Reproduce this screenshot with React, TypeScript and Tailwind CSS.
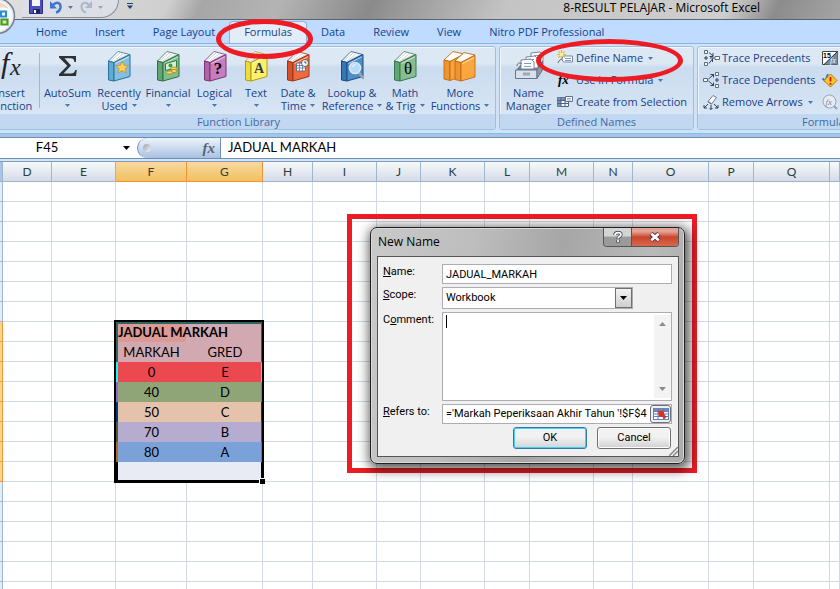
import { useState, type ReactNode } from "react";

const tabs = ["Home", "Insert", "Page Layout", "Formulas", "Data", "Review", "View", "Nitro PDF Professional"];

const columns = [
  { name: "D", width: "w-[49px]" },
  { name: "E", width: "w-[64px]" },
  { name: "F", width: "w-[71px]" },
  { name: "G", width: "w-[76px]" },
  { name: "H", width: "w-[50px]" },
  { name: "I", width: "w-[64px]" },
  { name: "J", width: "w-[44px]" },
  { name: "K", width: "w-[64px]" },
  { name: "L", width: "w-[45px]" },
  { name: "M", width: "w-[64px]" },
  { name: "N", width: "w-[39px]" },
  { name: "O", width: "w-[76px]" },
  { name: "P", width: "w-[45px]" },
  { name: "Q", width: "w-[76px]" },
  { name: "", width: "" },
];

const FIRST_ROW = 38;
const TITLE_ROW = 45;

const grades = [
  { mark: "MARKAH", grade: "GRED", fill: "bg-[#d2a9b0]", left: "shadow-[inset_2px_0_#2c6464]", right: "shadow-[inset_-2px_0_#2c6464]" },
  { mark: "0", grade: "E", fill: "bg-[#ec4850]", left: "shadow-[inset_2px_0_#00ffff]", right: "shadow-[inset_-2px_0_#00ffff]" },
  { mark: "40", grade: "D", fill: "bg-[#8fa577]", left: "shadow-[inset_2px_0_#8d6cc0]", right: "shadow-[inset_-2px_0_#8d6cc0]" },
  { mark: "50", grade: "C", fill: "bg-[#e5c2ac]", left: "shadow-[inset_2px_0_#003a70]", right: "shadow-[inset_-2px_0_#003a70]" },
  { mark: "70", grade: "B", fill: "bg-[#b5acd0]", left: "shadow-[inset_2px_0_#4b5b35]", right: "shadow-[inset_-2px_0_#4b5b35]" },
  { mark: "80", grade: "A", fill: "bg-[#7ba2d8]", left: "shadow-[inset_2px_0_#b06a28]", right: "shadow-[inset_-2px_0_#b06a28]" },
  { mark: "", grade: "", fill: "bg-[#e8ebf4]", left: "shadow-[inset_2px_0_#000]", right: "shadow-[inset_-2px_0_#000]" },
];

function Caret({ className = "fill-[#4a78b0]" }: { className?: string }) {
  return (
    <svg className={`inline-block h-[3px] w-[5px] shrink-0 ${className}`} viewBox="0 0 5 3">
      <path d="M0 0h5L2.5 3z" />
    </svg>
  );
}

function Book({ cover, spine, edge, children }: { cover: string; spine: string; edge: string; children?: ReactNode }) {
  return (
    <svg className="h-8 w-6" viewBox="0 0 24 32" aria-hidden="true">
      <path d="M1.5 11 11 1.5 22.5 4.500 7 12.500z" fill="#fff" stroke={edge} strokeWidth="0.8" />
      <path d="M4 10.500 13 3M7 11 16 4M9 10.500 19 5" stroke="#b8c0c8" strokeWidth="0.7" />
      <path d="M1.500 11 7 12.500V31L1.500 30z" fill={spine} stroke={edge} strokeLinejoin="round" />
      <path d="M7 12.500 23 4.500V26.500L7 31z" fill={cover} stroke={edge} strokeLinejoin="round" />
      <path d="M8.500 13.500 22 6.800" stroke="#fff" strokeOpacity="0.6" />
      {children}
    </svg>
  );
}

const books = {
  recent: (
    <Book cover="#7fc0e4" spine="#5fabd4" edge="#2b7096">
      <path d="M15 11l2 4.300 4.500.2-3.500 3 1.300 4.500-4.300-2.500-4 2.700 1.200-4.700-3.400-2.800 4.500-.3z" fill="#ffd25a" stroke="#d98a1c" strokeWidth="0.8" />
    </Book>
  ),
  financial: (
    <Book cover="#82bd8c" spine="#5fa671" edge="#2f6f45">
      <path d="M9.500 13.500l11-3v7l-11 3z" fill="#d6efd2" stroke="#2f7d3e" />
      <circle cx="14.500" cy="15.500" r="2" fill="#3f9a4c" />
      <ellipse cx="18" cy="18.500" rx="3" ry="1.500" fill="#ffd95e" stroke="#a87b12" strokeWidth="0.7" />
      <ellipse cx="18" cy="21" rx="3" ry="1.500" fill="#ffd95e" stroke="#a87b12" strokeWidth="0.7" />
      <ellipse cx="13.500" cy="22.500" rx="3" ry="1.500" fill="#ffd95e" stroke="#a87b12" strokeWidth="0.7" />
    </Book>
  ),
  logical: (
    <Book cover="#c77cbe" spine="#b064a8" edge="#7a3574">
      <text x="15" y="24" textAnchor="middle" fontSize="17" fontWeight="bold" fontFamily="Liberation Serif, serif">?</text>
    </Book>
  ),
  text: (
    <Book cover="#fdf06a" spine="#eedb3c" edge="#b39a10">
      <text x="15" y="23" textAnchor="middle" fontSize="14" fontWeight="bold" fontFamily="Liberation Serif, serif" fill="#3a3a50">A</text>
    </Book>
  ),
  date: (
    <Book cover="#ee6a3c" spine="#d4522a" edge="#a03210">
      <path d="M10.500 13h9v8h-9z" fill="#fff" stroke="#5876a8" />
      <path d="M10.500 15.500h9M10.500 18h9M13.500 13v8M16.500 13v8" stroke="#5876a8" strokeWidth="0.8" />
      <circle cx="19" cy="13" r="3.500" fill="#f4f6fa" stroke="#555" strokeWidth="0.9" />
      <path d="M19 11v2h1.500" fill="none" stroke="#333" strokeWidth="0.8" />
    </Book>
  ),
  lookup: (
    <Book cover="#4b8fca" spine="#3576b4" edge="#1c4a80">
      <path d="M18.500 22l4.500 6" stroke="#9aa2ac" strokeWidth="2.500" strokeLinecap="round" />
      <circle cx="15" cy="18" r="5.500" fill="#b4dcf8" stroke="#dde3ea" strokeWidth="1.600" />
      <path d="M12.500 17a3 3 0 0 1 3-2.300" fill="none" stroke="#fff" />
    </Book>
  ),
  math: (
    <Book cover="#88bd90" spine="#62a676" edge="#347a4c">
      <text x="15" y="24" textAnchor="middle" fontSize="17" fontFamily="Liberation Serif, serif">θ</text>
    </Book>
  ),
};

function FxIcon() {
  return (
    <svg className="h-8 w-9" viewBox="0 0 36 32" aria-hidden="true">
      <text x="9" y="23" fontSize="30" fontStyle="italic" fontFamily="Liberation Serif, serif" fill="#222">f</text>
      <text x="18" y="25" fontSize="24" fontStyle="italic" fontFamily="Liberation Serif, serif" fill="#222">x</text>
    </svg>
  );
}

function SigmaIcon() {
  return (
    <svg className="h-8 w-6" viewBox="0 0 24 32" aria-hidden="true">
      <path d="M3 6h17v6h-1.500c-.5-3-1.500-3.800-4-3.800H8.500l6.500 7.300-7.500 8H15c2.500 0 3.500-1 4.300-3.500h1.500L20 26H3v-1.800l8.300-8.400L3 7.500z" fill="#2e3236" />
    </svg>
  );
}

function MoreIcon() {
  return (
    <svg className="h-8 w-9" viewBox="0 0 36 32" aria-hidden="true">
      <g stroke="#bf6a12" strokeLinejoin="round" strokeWidth="0.9">
        <path d="M2 10 11 1.500 22 4 8 11.500z" fill="#fff" />
        <path d="M2 10 8 11.500V30.500L2 29z" fill="#ee9530" />
        <path d="M8 11.500 21 5V26L8 30.500z" fill="#f8a43c" />
        <path d="M13 11 22 2.500 33 5 19 12.500z" fill="#fff" />
        <path d="M13 11 19 12.500V31L13 29.500z" fill="#ee9530" />
        <path d="M19 12.500 33 5.500V27L19 31z" fill="#fba640" />
      </g>
      <path d="M20.500 13.500 32 7.500" stroke="#ffe0b0" />
    </svg>
  );
}

function NameManagerIcon() {
  return (
    <svg className="h-8 w-8" viewBox="0 0 32 32" aria-hidden="true">
      <path d="M3 20 11 11h18l-5 9z" fill="#6e7a8c" />
      <g fill="#fff" stroke="#7c8796">
        <path d="M18 3l9-1 3 3v9H18z" />
        <path d="M13 7l9-1 3 3v9H13z" />
        <path d="M8 10l10-1 3 3v7H8z" />
      </g>
      <path d="M11 13.500h7M11 16.500h7M16 9.500h5M21 5.500h5" stroke="#7a9cc8" />
      <path d="M4 16c0-3 3-4 5-2" fill="none" stroke="#666" />
      <path d="M2.500 20H24v8.500H2.500z" fill="#d9e0ea" stroke="#68778c" />
      <path d="M24 20l5.500-9v9L24 28.500z" fill="#8b98ac" stroke="#68778c" />
      <path d="M10 22.500h7v3h-7z" fill="#9aa9be" />
    </svg>
  );
}

function RibbonButton({ icon, lines, width, caret }: { icon: ReactNode; lines: string[]; width: string; caret?: boolean }) {
  return (
    <button type="button" className={`flex shrink-0 flex-col items-center pt-[3px] leading-[13px] whitespace-nowrap ${width}`}>
      {icon}
      <span className="mt-1">{lines[0]}</span>
      <span className="flex h-[13px] items-center gap-1">
        {lines[1]}
        {caret && <Caret />}
      </span>
    </button>
  );
}

function SmallButton({ icon, label, caret }: { icon: ReactNode; label: string; caret?: boolean }) {
  return (
    <button type="button" className="flex h-[22px] items-center gap-[2px] whitespace-nowrap">
      {icon}
      {label}
      {caret && <span className="ml-[3px] flex"><Caret /></span>}
    </button>
  );
}

function RibbonGroup({ title, className, children }: { title: string; className: string; children: ReactNode }) {
  return (
    <section className={`flex shrink-0 flex-col overflow-hidden rounded-[3px] border border-[#9fbfe0] bg-linear-to-b from-[#dde8f5] from-20% via-[#cbdcef] via-25% to-[#dbe8f6] shadow-[inset_1px_1px_#eff6fd] ${className}`}>
      <div className="flex flex-1">{children}</div>
      <h2 className="h-[15px] bg-[#c1d8f0] text-center leading-[15px] text-[#3e6aaa]">{title}</h2>
    </section>
  );
}

function TitleBar() {
  return (
    <header className="relative flex h-5 items-center border-b border-[#5f6368] bg-[linear-gradient(115deg,#e0e0e0_0%,#cfcfcf_20%,#a6a6a6_24%,#b4b4b4_33%,#8a8a8a_44%,#9a9a9a_48%,#c4c4c4_60%,#cfcfcf_86%,#8c8c8c_92%,#a5a5a5_100%)]">
      <div className="ml-[22px] flex h-[18px] w-[97px] items-start gap-[6px] self-start rounded-br-full border-r border-b border-[#8b8f96] bg-[#dcdfe6] pl-[7px]">
        <button type="button" aria-label="Save">
          <svg className="h-[14px] w-[14px]" viewBox="0 0 14 14">
            <path d="M.5-2h13v15.500h-13z" fill="#4b4fc0" stroke="#2c2f88" />
            <path d="M3-2h8v8H3z" fill="#f4f6ff" />
            <path d="M4 9h7v4.500H4z" fill="#20225c" />
            <path d="M5 10h2v3H5z" fill="#fff" />
          </svg>
        </button>
        <button type="button" aria-label="Undo" className="flex items-center gap-[5px]">
          <svg className="h-[14px] w-[14px]" viewBox="0 0 14 14">
            <path d="M4 5c4-4 8-2 7.500 2.500C11 10 9 12 7 12.500" fill="none" stroke="#3f74cf" strokeWidth="2.500" />
            <path d="M1 1v7.500h7z" fill="#3f74cf" />
          </svg>
          <Caret />
        </button>
        <button type="button" aria-label="Redo" className="flex items-center gap-[5px]">
          <svg className="h-[14px] w-[14px]" viewBox="0 0 14 14">
            <path d="M10 5C6 1 2 3 2.500 7.500 3 10 5 12 7 12.500" fill="none" stroke="#a9b8cc" strokeWidth="2" />
            <path d="M13 1v7H6z" fill="#a9b8cc" />
          </svg>
          <Caret className="fill-[#9aa4b2]" />
        </button>
      </div>
      <button type="button" aria-label="Customize Quick Access Toolbar" className="mt-[3px] ml-[8px] self-start">
        <svg className="h-[6px] w-[6px]" viewBox="0 0 6 6" fill="#1f3f78">
          <path d="M0 0h6v1H0zM0 2.500h6L3 6z" />
        </svg>
      </button>
      <h1 className="mr-[80px] ml-auto pb-1 text-[12px] leading-4 text-black">8-RESULT PELAJAR - Microsoft Excel</h1>
      <svg className="absolute -top-[3px] -left-[22px] z-10 h-[38px] w-[38px]" viewBox="0 0 38 38" aria-hidden="true">
        <circle cx="19" cy="19" r="17.500" fill="#e6eaf0" stroke="#76808e" strokeWidth="1.500" />
        <circle cx="19" cy="19" r="15" fill="#f8fafc" />
        <path d="M14 6c6-2 14 0 17 6-5-2-12-2-17 1z" fill="#f3d8c6" />
        <path d="M23 14.500h5v5h-5z" fill="#fff" stroke="#2a8fd0" strokeWidth="2.200" />
        <path d="M23.500 22.500h6v5h-6z" fill="#d9f0a8" stroke="#4a9a24" strokeWidth="2.200" />
        <path d="M15 17h5v4h-5zM16 23h5v5h-5z" fill="#fff" stroke="#5aa52c" strokeWidth="2" />
      </svg>
    </header>
  );
}

function Ribbon() {
  return (
    <div className="flex h-[90px] gap-[3px] overflow-hidden border-b border-[#7fc3e8] bg-[#cfe2f7] pt-[2px] pb-[3px] text-[#15428b]">
      <RibbonGroup title="Function Library" className="-ml-[19px] w-[515px]">
        <RibbonButton icon={<FxIcon />} lines={["Insert", "Function"]} width="w-[56px]" />
        <div className="mx-px mt-[6px] h-[55px] w-px shrink-0 bg-[#9db9da]" />
        <RibbonButton icon={<SigmaIcon />} lines={["AutoSum"]} width="w-[53px]" caret />
        <RibbonButton icon={books.recent} lines={["Recently", "Used"]} width="w-[50px]" caret />
        <RibbonButton icon={books.financial} lines={["Financial"]} width="w-[48px]" caret />
        <RibbonButton icon={books.logical} lines={["Logical"]} width="w-[45px]" caret />
        <RibbonButton icon={books.text} lines={["Text"]} width="w-[38px]" caret />
        <RibbonButton icon={books.date} lines={["Date &", "Time"]} width="w-[46px]" caret />
        <RibbonButton icon={books.lookup} lines={["Lookup &", "Reference"]} width="w-[62px]" caret />
        <RibbonButton icon={books.math} lines={["Math", "& Trig"]} width="w-[44px]" caret />
        <RibbonButton icon={<MoreIcon />} lines={["More", "Functions"]} width="w-[66px]" caret />
      </RibbonGroup>

      <RibbonGroup title="Defined Names" className="w-[195px]">
        <RibbonButton icon={<NameManagerIcon />} lines={["Name", "Manager"]} width="w-[57px]" />
        <div className="flex flex-col">
          <SmallButton
            label="Define Name"
            caret
            icon={
              <svg className="h-4 w-[17px]" viewBox="0 0 17 16">
                <path d="M6.500 6h9v6h-9l-2-3z" fill="#fff" stroke="#7688a4" />
                <path d="M8 8.500h6M8 10.500h6" stroke="#7a9cc8" />
                <path d="M1 13c1-3 3-4 5-4" fill="none" stroke="#666" />
                <path d="M4.500 0v9M0 4.500h9M1.300 1.300l6.400 6.400M7.700 1.300 1.300 7.700" stroke="#e8b820" strokeWidth="1.200" />
                <circle cx="4.500" cy="4.500" r="1.800" fill="#fff2a0" />
              </svg>
            }
          />
          <SmallButton
            label="Use in Formula"
            caret
            icon={
              <svg className="h-4 w-[17px]" viewBox="0 0 17 16">
                <text x="1" y="12" fontSize="13" fontStyle="italic" fontWeight="bold" fontFamily="Liberation Serif, serif">fx</text>
                <path d="M11 5h5" stroke="#333" />
              </svg>
            }
          />
          <SmallButton
            label="Create from Selection"
            icon={
              <svg className="h-4 w-[17px]" viewBox="0 0 17 16">
                <path d="M.5 3.500h11v9H.5z" fill="#fff" stroke="#4d6288" />
                <path d="M.5 3.500h11v3H.5zM.5 6.500h3.500v6H.5z" fill="#7d93b8" />
                <path d="M4 3.500v9M8 3.500v9M.5 6.500h11M.5 9.500h11" stroke="#4d6288" />
                <path d="M8.500 2.500h7v5h-7z" fill="#fff" stroke="#5f7190" />
                <path d="M10 4.500h4M10 6h4" stroke="#7a9cc8" strokeWidth="0.8" />
              </svg>
            }
          />
        </div>
      </RibbonGroup>

      <RibbonGroup title="Formula Auditing" className="w-[298px]">
        <div className="ml-[5px] flex w-[119px] shrink-0 flex-col">
          <SmallButton
            label="Trace Precedents"
            icon={
              <svg className="h-4 w-[17px] shrink-0" viewBox="0 0 17 16" fill="none">
                <path d="M1.500.500h3v3h-3zM1.500 12.500h3v3h-3zM12 6.500h4.500v3H12z" fill="#fff" stroke="#5c6a80" />
                <path d="M1 8h4M3 6v4M6 2.500l4 3.500M6 13.500 9.500 9M7 8h4.500" stroke="#2f3f5c" />
                <path d="M10 3v3.500H6.500M9.500 12V8.500" stroke="#2f3f5c" />
              </svg>
            }
          />
          <SmallButton
            label="Trace Dependents"
            icon={
              <svg className="h-4 w-[17px] shrink-0" viewBox="0 0 17 16" fill="none">
                <path d="M.5 6.500h4v3h-4zM12.500.500h3v3h-3zM12.500 12.500h3v3h-3z" fill="#fff" stroke="#5c6a80" />
                <path d="M12 8h4M14 6v4M5.500 7l5-4.500M5.500 9l5 4.500M7.500 2.500h3v3M7.500 13.500h3v-3" stroke="#2f3f5c" />
              </svg>
            }
          />
          <SmallButton
            label="Remove Arrows"
            caret
            icon={
              <svg className="h-4 w-[17px] shrink-0" viewBox="0 0 17 16" fill="none">
                <path d="M5 7.500 10 1.500l3.500 2-5 6.500z" fill="#fff" stroke="#6b7890" />
                <path d="M5 7.500l3.500 2.500" stroke="#6b7890" strokeWidth="1.500" />
                <path d="M5 10l-4 4M1 11v3h3M8 11v4.500M6.500 14 8 15.500 9.500 14M11 10l4 4M15 11v3h-3" stroke="#2f3f5c" />
              </svg>
            }
          />
        </div>
        <div className="flex flex-col">
          <button type="button" aria-label="Show Formulas" className="flex h-[22px] items-center">
            <svg className="h-4 w-4" viewBox="0 0 16 16">
              <path d="M.5 1.500h15v13H.5z" fill="#fff" stroke="#444" />
              <path d="M15.500 1.500v13H2z" fill="#7c8a9c" />
              <path d="M2 14.500 15.500 1.500" stroke="#222" />
              <text x="1" y="8" fontSize="7" fontWeight="bold" fontFamily="Liberation Sans, sans-serif">15</text>
              <text x="8" y="13" fontSize="8" fontStyle="italic" fill="#fff" fontFamily="Liberation Serif, serif">fx</text>
            </svg>
          </button>
          <button type="button" aria-label="Error Checking" className="flex h-[22px] items-center">
            <svg className="h-4 w-4" viewBox="0 0 16 16">
              <path d="M.5 6.500 3 9 6 2" fill="none" stroke="#3f6cc0" strokeWidth="1.800" />
              <path d="M8.500 2 15 8.500 8.500 15 2 8.500z" fill="#ffc52e" stroke="#b87a08" />
              <path d="M8.500 5v4.500M8.500 11v1.800" stroke="#c01818" strokeWidth="1.800" />
            </svg>
          </button>
          <button type="button" aria-label="Evaluate Formula" className="flex h-[22px] items-center">
            <svg className="h-4 w-4" viewBox="0 0 16 16">
              <path d="M12 12l3 3" stroke="#98a2b0" strokeWidth="2" />
              <circle cx="7.500" cy="7.500" r="6.500" fill="#e6ecf4" stroke="#9aa6b6" />
              <text x="3.500" y="10.500" fontSize="9" fontStyle="italic" fill="#7b8798" fontFamily="Liberation Serif, serif">fx</text>
            </svg>
          </button>
        </div>
      </RibbonGroup>
    </div>
  );
}

function FormulaBar() {
  return (
    <div className="border-t-[3px] border-[#a9c4e4] bg-[#d6e4f4] font-['Lato','Noto_Sans',sans-serif] text-[13px] text-black">
      <div className="flex h-[22px] items-stretch border-y border-[#6a8fb8] bg-white">
        <div className="flex w-[137px] items-center">
          <input aria-label="Name Box" defaultValue="F45" className="w-[94px] bg-transparent text-center outline-none" />
          <button type="button" aria-label="Named ranges" className="ml-auto flex w-[22px] justify-center">
            <svg className="h-1 w-[7px]" viewBox="0 0 7 4"><path d="M0 0h7L3.500 4z" /></svg>
          </button>
        </div>
        <div className="flex w-[84px] items-center justify-between rounded-l-full border-r border-l border-[#6a8fb8] bg-linear-to-b from-[#eef4fb] to-[#a9c1e2] pr-[5px] pl-[5px]">
          <span className="h-2 w-2 rounded-full bg-linear-to-br from-[#9aa3ae] to-[#f4f6fa]" />
          <button type="button" aria-label="Insert function" className="font-['Liberation_Serif',serif] text-[15px] leading-4 font-bold text-[#5a6470] italic">fx</button>
        </div>
        <input aria-label="Formula" defaultValue="JADUAL MARKAH" className="min-w-0 flex-1 pl-[7px] outline-none" />
      </div>
      <div className="h-[3px] border-b border-[#7f9cc0]" />
    </div>
  );
}

function Sheet() {
  const blank = (key: string) => <td key={key} className="border-r border-b border-[#d0d7e5]" />;

  function renderCells(row: number) {
    return columns.map((col) => {
      const data = row > TITLE_ROW ? grades[row - TITLE_ROW - 1] : undefined;
      if (row === TITLE_ROW && col.name === "F") {
        return (
          <td key="F" colSpan={2} className="bg-[linear-gradient(90deg,#dc9a96_70px,#d2a9b0_70px)] text-left font-bold whitespace-nowrap shadow-[inset_2px_2px_#2c6464,inset_-2px_0_#2c6464]">
            <span className="pl-[2px]">JADUAL MARKAH</span>
          </td>
        );
      }
      if (row === TITLE_ROW && col.name === "G") return null;
      if (data && col.name === "F") return <td key="F" className={`${data.fill} ${data.left}`}>{data.mark}</td>;
      if (data && col.name === "G") return <td key="G" className={`${data.fill} ${data.right}`}>{data.grade}</td>;
      return blank(col.name);
    });
  }

  return (
    <div className="relative">
      <table className="w-full table-fixed border-separate border-spacing-0 text-center font-['Lato','Noto_Sans',sans-serif] text-[13px] leading-[19px] text-black">
        <thead>
          <tr className="h-5">
            <th className="w-[3px] border-r border-b border-[#9eb6ce] bg-[#a9c4e9]" aria-label="Row" />
            {columns.map((col) => (
              <th
                key={col.name}
                className={`border-r border-b p-0 text-[12px] leading-[19px] font-normal ${col.width} ${
                  col.name === "F" || col.name === "G"
                    ? "border-[#f29536] bg-linear-to-b from-[#f9d99f] to-[#f1c05f] text-[#3a3a3a]"
                    : "border-[#9eb6ce] bg-linear-to-b from-[#f7f9fb] to-[#d5dce8] text-[#27413e]"
                }`}
              >
                {col.name}
              </th>
            ))}
          </tr>
        </thead>
        <tbody className="[&_td]:p-0">
          {Array.from({ length: 21 }, (_, i) => FIRST_ROW + i).map((row) => (
            <tr key={row} className="h-5">
              <td className={`border-r border-b ${row >= TITLE_ROW && row < TITLE_ROW + 8 ? "border-[#f29536] bg-[#ffd58d]" : "border-[#9eb6ce] bg-[#e4ecf7]"}`} />
              {renderCells(row)}
            </tr>
          ))}
        </tbody>
      </table>
      {/* selection outline with its fill handle */}
      <div className="pointer-events-none absolute top-[158px] left-[114px] h-[163px] w-[150px] border-2 border-b-[3px] border-black">
        <span className="absolute -right-[3px] -bottom-[4px] h-[6px] w-[6px] border-t border-l border-white bg-black" />
      </div>
    </div>
  );
}

function NewNameDialog() {
  const [name, setName] = useState("JADUAL_MARKAH");
  const [comment, setComment] = useState("");
  const field = "border border-[#abadb3] bg-white px-[3px] outline-none";

  return (
    <div role="dialog" aria-labelledby="dialog-title" className="rounded-[7px] border border-[#222] bg-[linear-gradient(100deg,#c9c9c9,#bdbdbd_30%,#a6a6a6_55%,#b9b9b9_80%,#acacac)] pr-[5px] pb-[6px] pl-[6px] font-['Roboto','Noto_Sans',sans-serif] text-[11px] text-black shadow-[inset_0_0_0_1px_#d8d8d8,2px_3px_12px_3px_rgba(0,0,0,0.65)]">
      <div className="flex h-7 items-start">
        <h2 id="dialog-title" className="pt-[6px] pl-px font-['Open_Sans','Noto_Sans',sans-serif] text-[12px] leading-4">New Name</h2>
        <div className="ml-auto flex h-[19px] overflow-hidden rounded-b-[4px] border border-t-0 border-[#555]">
          <button type="button" aria-label="Help" className="flex w-7 items-center justify-center border-r border-[#555] bg-linear-to-b from-[#d4d4d4] from-45% to-[#9a9a9a] to-50%">
            <svg className="h-3 w-3" viewBox="0 0 12 12" fill="none">
              <path d="M3 4C3 .8 9 .8 9 3.500 9 5.500 6 5.500 6 8M6 9v2.500" stroke="#454a5a" strokeWidth="3.400" />
              <path d="M3 4C3 .8 9 .8 9 3.500 9 5.500 6 5.500 6 7.500M6 9v2" stroke="#fff" strokeWidth="1.700" />
            </svg>
          </button>
          <button type="button" aria-label="Close" className="flex w-[46px] items-center justify-center bg-linear-to-b from-[#e3a394] from-20% via-[#c8452c] via-50% to-[#d8694c]">
            <svg className="h-[10px] w-3" viewBox="0 0 12 10">
              <path d="M2 1.500l8 7M10 1.500l-8 7" stroke="#5a3a40" strokeWidth="4.500" />
              <path d="M2.300 1.800l7.400 6.400M9.700 1.800 2.300 8.200" stroke="#fff" strokeWidth="2.600" />
            </svg>
          </button>
        </div>
      </div>
      <form className="relative grid grid-cols-[59px_minmax(0,1fr)] gap-y-[3px] border border-[#555] bg-[#f0f0f0] pt-[7px] pr-[6px] pb-[7px] pl-[5px]" onSubmit={(e) => e.preventDefault()}>
        <label htmlFor="name"><u>N</u>ame:</label>
        <input id="name" value={name} onChange={(e) => setName(e.target.value)} className={`h-5 ${field}`} />

        <label htmlFor="scope"><u>S</u>cope:</label>
        <div className="relative mr-[39px]">
          <select id="scope" defaultValue="Workbook" className={`block h-[22px] w-full appearance-none ${field}`}>
            <option>Workbook</option>
          </select>
          <span className="pointer-events-none absolute top-px right-px flex h-5 w-[17px] items-center justify-center border border-[#707070] bg-linear-to-b from-[#f2f2f2] to-[#cfcfcf]">
            <svg className="h-1 w-[7px]" viewBox="0 0 7 4"><path d="M0 0h7L3.500 4z" /></svg>
          </span>
        </div>

        <label htmlFor="comment">C<u>o</u>mment:</label>
        <div className="flex h-[89px] border border-[#abadb3] bg-white">
          <textarea id="comment" autoFocus value={comment} onChange={(e) => setComment(e.target.value)} className="min-w-0 flex-1 resize-none px-[3px] pt-[2px] caret-transparent outline-none" />
          <div className="my-[2px] flex w-[17px] flex-col items-center justify-between bg-[#f3f3f3] py-[7px]">
            <svg className="h-1 w-[7px] fill-[#8c8c8c]" viewBox="0 0 7 4"><path d="M0 4h7L3.500 0z" /></svg>
            <svg className="h-1 w-[7px] fill-[#8c8c8c]" viewBox="0 0 7 4"><path d="M0 0h7L3.500 4z" /></svg>
          </div>
        </div>
        <span className="pointer-events-none absolute top-[58px] left-[68px] h-[13px] w-px bg-black" />

        <label htmlFor="refers"><u>R</u>efers to:</label>
        <div className="flex h-5 border border-[#abadb3] bg-white">
          <input id="refers" defaultValue="='Markah Peperiksaan Akhir Tahun '!$F$4" className="min-w-0 flex-1 pl-[3px] outline-none" />
          <button type="button" aria-label="Collapse dialog" className="flex w-[21px] shrink-0 items-center justify-center rounded-[3px] border border-[#707070] bg-[#f0f0f0]">
            <svg className="h-3 w-4" viewBox="0 0 16 12">
              <path d="M0 0h16v12H0z" fill="#fff" />
              <path d="M0 0h16v3H0z" fill="#6a86c4" />
              <path d="M0 3.500h16M0 6h16M0 8.500h16M0 11.500h16M.500 0v12M5 0v12M10.500 0v12M15.500 0v12" stroke="#5f7fc0" />
              <path d="M5 3l5-.5 1.500 4 2 2.500-2 2-2.500-2.500L6 9z" fill="#d8341c" />
            </svg>
          </button>
        </div>

        <div className="col-span-2 flex justify-end gap-[10px] pr-px">
          <button type="submit" className="h-[22px] w-[74px] rounded-[3px] border border-[#2c7ba8] bg-linear-to-b from-[#f2f2f2] from-45% to-[#d3d3d3] shadow-[inset_0_0_0_1px_#48d0f4]">OK</button>
          <button type="button" className="h-[22px] w-[74px] rounded-[3px] border border-[#707070] bg-linear-to-b from-[#f2f2f2] from-45% to-[#d0d0d0] shadow-[inset_0_0_0_1px_#fcfcfc]">Cancel</button>
        </div>
        <svg className="pointer-events-none absolute right-0 bottom-0 h-[9px] w-[9px]" viewBox="0 0 9 9">
          <path d="M0 9 9 0M4 9l5-5" stroke="#8a8a8a" strokeWidth="1.500" />
        </svg>
      </form>
    </div>
  );
}

export default function App() {
  const [activeTab, setActiveTab] = useState("Formulas");

  return (
    <div className="relative h-screen overflow-hidden bg-white font-['Open_Sans','Noto_Sans',sans-serif] text-[11px]">
      <TitleBar />
      <nav className="flex h-6 items-end border-b border-[#8db2e3] bg-[#bfdbff] pl-[22px] text-[#15428b]">
        {tabs.map((tab) => (
          <button
            key={tab}
            type="button"
            onClick={() => setActiveTab(tab)}
            className={`h-[22px] px-[14px] whitespace-nowrap ${
              tab === activeTab ? "rounded-t-[4px] border border-b-0 border-[#8db2e3] bg-[#e3edf9]" : ""
            }`}
          >
            {tab}
          </button>
        ))}
      </nav>
      <Ribbon />
      <FormulaBar />
      <Sheet />

      {/* red marker shapes */}
      <div className="pointer-events-none absolute top-[19px] left-[216px] z-20 h-[40px] w-[97px] rounded-[50%] border-[5px] border-[#ed1c24]" />
      <div className="pointer-events-none absolute top-[39px] left-[536px] z-20 h-[43px] w-[147px] rounded-[50%] border-[5px] border-[#ed1c24]" />
      <div className="absolute top-[214px] left-[347px] w-[350px] border-[5px] border-[#ed1c24] pt-[8px] pr-[7px] pb-[4px] pl-[18px]">
        <NewNameDialog />
      </div>
    </div>
  );
}
